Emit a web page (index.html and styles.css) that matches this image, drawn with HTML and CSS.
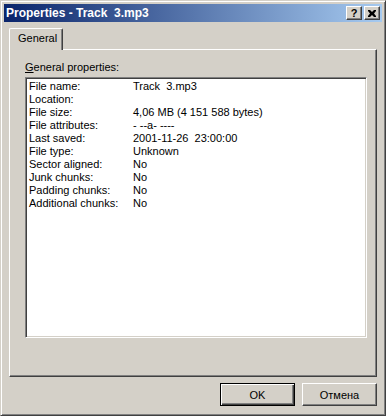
FILE: index.html
```html
<!DOCTYPE html>
<html lang="ru">
<head>
    <meta charset="UTF-8">
    <title>Properties - Track 3.mp3</title>
    <link rel="stylesheet" href="styles.css">
</head>
<body>
    <div class="window">
        <div class="titlebar">
            <span class="title">Properties - Track  3.mp3</span>
            <div class="caption-buttons">
                <button class="cap-btn">?</button>
                <button class="cap-btn cap-close">
                    <svg width="8" height="7" viewBox="0 0 8 7"><path d="M0 0h2l2 2l2-2h2v1l-2 2.5l2 2.5v1h-2l-2-2l-2 2h-2v-1l2-2.5l-2-2.5z" fill="#000"/></svg>
                </button>
            </div>
        </div>
        <div class="client">
            <div class="tabs">
                <div class="tab">General</div>
            </div>
            <div class="panel">
                <div class="group-label"><u>G</u>eneral properties:</div>
                <div class="listbox">
                    <div class="row"><span class="key">File name:</span><span class="val">Track  3.mp3</span></div>
                    <div class="row"><span class="key">Location:</span><span class="val"></span></div>
                    <div class="row"><span class="key">File size:</span><span class="val">4,06 MB (4 151 588 bytes)</span></div>
                    <div class="row"><span class="key">File attributes:</span><span class="val">- --a- ----</span></div>
                    <div class="row"><span class="key">Last saved:</span><span class="val">2001-11-26  23:00:00</span></div>
                    <div class="row"><span class="key">File type:</span><span class="val">Unknown</span></div>
                    <div class="row"><span class="key">Sector aligned:</span><span class="val">No</span></div>
                    <div class="row"><span class="key">Junk chunks:</span><span class="val">No</span></div>
                    <div class="row"><span class="key">Padding chunks:</span><span class="val">No</span></div>
                    <div class="row"><span class="key">Additional chunks:</span><span class="val">No</span></div>
                </div>
            </div>
            <div class="footer">
                <button class="btn btn-default">OK</button>
                <button class="btn">Отмена</button>
            </div>
        </div>
    </div>
</body>
</html>
```

FILE: styles.css
```css
body {
    margin: 0;
    padding: 0;
    background: #D4D0C8;
    font-family: 'Liberation Sans', Arial, sans-serif;
    font-size: 11px;
    color: #000;
}
.window {
    width: 386px;
    height: 416px;
    box-sizing: border-box;
    background: #D4D0C8;
    border: 1px solid;
    border-color: #D4D0C8 #404040 #404040 #D4D0C8;
    box-shadow: inset 1px 1px #fff, inset -1px -1px #808080;
    padding: 3px 3px 3px 3px;
    display: flex;
    flex-direction: column;
}
.titlebar {
    height: 18px;
    background: linear-gradient(to right, #0A246A, #A6CAF0);
    display: flex;
    align-items: center;
    justify-content: space-between;
    padding: 0 2px 0 2px;
}
.title {
    color: #fff;
    font-weight: bold;
    font-size: 12px;
    white-space: pre;
}
.caption-buttons {
    display: flex;
    gap: 2px;
}
.cap-btn {
    width: 16px;
    height: 14px;
    padding: 0;
    margin: 0;
    background: #D4D0C8;
    border: 1px solid;
    border-color: #fff #404040 #404040 #fff;
    box-shadow: inset -1px -1px #808080;
    font-family: 'Liberation Sans', Arial, sans-serif;
    font-weight: bold;
    font-size: 11px;
    line-height: 11px;
    display: flex;
    align-items: center;
    justify-content: center;
}
.client {
    flex: 1;
    display: flex;
    flex-direction: column;
    padding: 6px 5px 0 5px;
}
.tabs {
    display: flex;
    height: 21px;
}
.tab {
    width: 54px;
    box-sizing: border-box;
    border-top: 1px solid #fff;
    border-left: 1px solid #fff;
    border-right: 1px solid #404040;
    box-shadow: inset -1px 0 #808080;
    border-radius: 2px 2px 0 0;
    padding: 3px 0 0 8px;
    position: relative;
    z-index: 1;
    margin-bottom: -1px;
    background: #D4D0C8;
}
.panel {
    width: 368px;
    height: 328px;
    box-sizing: border-box;
    border: 1px solid;
    border-color: #fff #404040 #404040 #fff;
    box-shadow: inset -1px -1px #808080;
    padding: 11px 0 0 15px;
}
.group-label {
    height: 16px;
}
.listbox {
    width: 342px;
    height: 261px;
    box-sizing: border-box;
    background: #fff;
    border: 1px solid;
    border-color: #808080 #fff #fff #808080;
    box-shadow: inset 1px 1px #404040, inset -1px -1px #D4D0C8;
    padding: 2px 3px;
}
.row {
    display: flex;
    height: 13px;
    line-height: 13px;
    white-space: pre;
}
.key {
    width: 104px;
}
.footer {
    display: flex;
    justify-content: flex-end;
    gap: 7px;
    padding: 6px 0 0 0;
}
.btn {
    width: 75px;
    height: 23px;
    box-sizing: border-box;
    background: #D4D0C8;
    border: 1px solid;
    border-color: #fff #404040 #404040 #fff;
    box-shadow: inset -1px -1px #808080;
    font-family: 'Liberation Sans', Arial, sans-serif;
    font-size: 11px;
    color: #000;
    padding: 0;
}
.btn-default {
    border: 1px solid #000;
    box-shadow: inset 1px 1px #fff, inset -1px -1px #404040, inset -2px -2px #808080;
}
```
